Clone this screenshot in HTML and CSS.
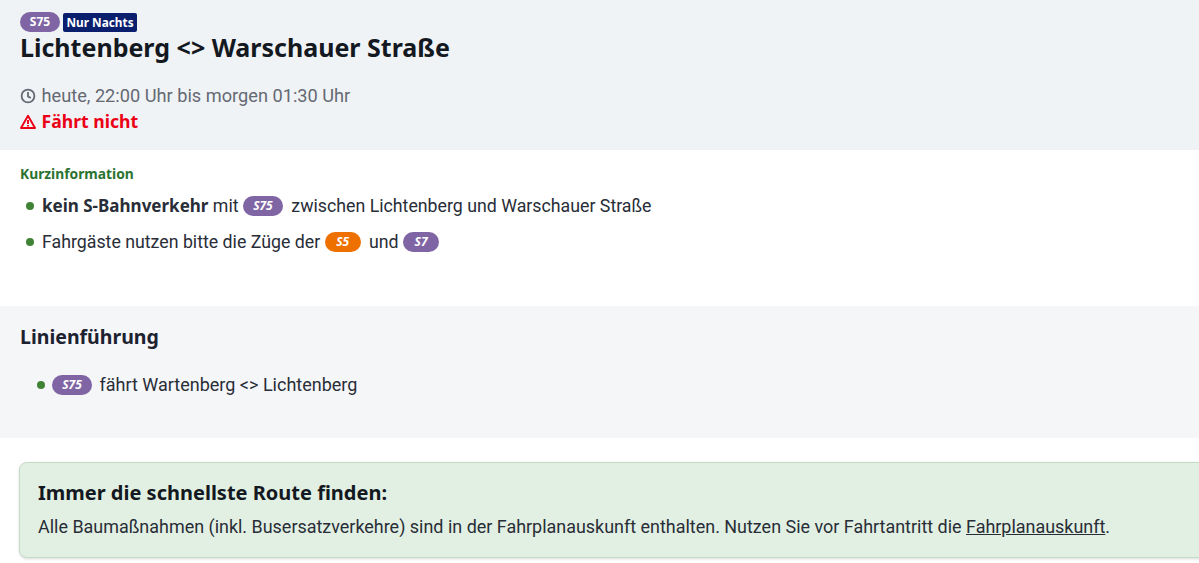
FILE: index.html
```html
<!DOCTYPE html>
<html lang="de">
<head>
    <meta charset="UTF-8">
    <meta name="viewport" content="width=device-width, initial-scale=1.0">
    <title>Lichtenberg &lt;&gt; Warschauer Straße</title>
    <link rel="stylesheet" href="styles.css">
</head>
<body>
    <header class="head">
        <div class="badges">
            <span class="line line-purple line-top">S75</span>
            <span class="night">Nur Nachts</span>
        </div>
        <h1>Lichtenberg &lt;&gt; Warschauer Straße</h1>
        <p class="time">
            <svg class="icon" viewBox="0 0 16 16" fill="none" stroke="currentColor" stroke-width="1.8"><circle cx="8" cy="8" r="6.4"/><path d="M8 4V8.4L10.8 10"/></svg>
            heute, 22:00 Uhr bis morgen 01:30 Uhr
        </p>
        <p class="status">
            <svg class="icon" viewBox="0 0 16 16" fill="none" stroke="currentColor" stroke-width="1.9"><path d="M8 1.8 15 14H1Z" stroke-linejoin="round"/><path d="M8 6V10M8 11V12.4"/></svg>
            Fährt nicht
        </p>
    </header>

    <section class="short">
        <h2>Kurzinformation</h2>
        <ul class="list">
            <li><b>kein S-Bahnverkehr</b> mit <span class="line line-purple">S75</span> zwischen Lichtenberg und Warschauer Straße</li>
            <li>Fahrgäste nutzen bitte die Züge der <span class="line line-orange">S5</span> und <span class="line line-purple line-small">S7</span></li>
        </ul>
    </section>

    <section class="route">
        <h3>Linienführung</h3>
        <ul class="list">
            <li><span class="line line-purple">S75</span> fährt Wartenberg &lt;&gt; Lichtenberg</li>
        </ul>
    </section>

    <section class="tip">
        <h4>Immer die schnellste Route finden:</h4>
        <p>Alle Baumaßnahmen (inkl. Busersatzverkehre) sind in der Fahrplanauskunft enthalten. Nutzen Sie vor Fahrtantritt die <a href="#">Fahrplanauskunft</a>.</p>
    </section>
</body>
</html>
```

FILE: styles.css
```css
* {
    margin: 0;
    padding: 0;
    box-sizing: border-box;
}

body {
    font-family: Roboto, sans-serif;
    color: #282d37;
    background: #fff;
    height: 563px;
    overflow: hidden;
}

.head {
    height: 150px;
    padding: 12px 20px 0;
    background: #f0f3f5;
}

.badges {
    display: flex;
    gap: 3px;
    height: 20px;
    align-items: center;
}

.line {
    display: inline-block;
    width: 40px;
    height: 20px;
    margin-right: 4px;
    border-radius: 10px;
    font-family: "Noto Sans", sans-serif;
    font-size: 12px;
    font-weight: 700;
    font-style: italic;
    line-height: 20px;
    text-align: center;
    color: #fff;
    vertical-align: 2px;
}

.line-top {
    margin: 0;
    font-style: normal;
}

.line-purple {
    background: #8065a4;
}

.line-orange {
    width: 36px;
    background: #ee7100;
}

.line-small {
    width: 36px;
}

.night {
    height: 19px;
    padding: 0 3.5px;
    border-radius: 2px;
    background: #0a1e6e;
    color: #fff;
    font-family: "Noto Sans", sans-serif;
    font-size: 11.8px;
    font-weight: 700;
    line-height: 19px;
}

h1 {
    font-family: "Noto Sans", sans-serif;
    font-size: 25px;
    line-height: 30px;
    color: #131821;
}

.time {
    margin-top: 21px;
    font-size: 18.2px;
    line-height: 26px;
    color: #646973;
}

.status {
    font-family: "Noto Sans", sans-serif;
    font-size: 17.6px;
    line-height: 24px;
    font-weight: 700;
    color: #ec0016;
}

.icon {
    width: 16px;
    height: 16px;
    margin-right: 1px;
    vertical-align: -2px;
}

.short {
    height: 156px;
    padding: 14px 20px 0;
}

h2 {
    font-family: "Noto Sans", sans-serif;
    font-size: 13.8px;
    line-height: 20px;
    color: #2a7230;
}

.list {
    list-style: none;
    font-size: 18px;
}

.list li {
    height: 37px;
    line-height: 37px;
}

.list li::before {
    content: "";
    display: inline-block;
    width: 8px;
    height: 8px;
    margin-right: 8px;
    border-radius: 50%;
    background: #408335;
    vertical-align: 2px;
}

.short .list {
    padding: 3px 0 0 6px;
    font-size: 17.75px;
}

.short b {
    font-family: "Noto Sans", sans-serif;
    font-size: 17px;
}

.route {
    height: 132px;
    padding: 17px 20px 0;
    background: #f5f6f8;
}

h3 {
    font-family: "Noto Sans", sans-serif;
    font-size: 19.5px;
    line-height: 28px;
    color: #1d2230;
}

.route .list {
    padding: 15px 0 0 17px;
}

.route .line {
    margin: 0 3px 0 -1px;
}

.tip {
    width: 1300px;
    height: 96px;
    margin: 24px 0 0 19px;
    padding: 16px 18px;
    border: 1px solid #c3dcc6;
    border-radius: 8px;
    background: #e2f0e3;
    box-shadow: 0 1px 3px rgba(0, 0, 0, 0.15);
}

h4 {
    font-family: "Noto Sans", sans-serif;
    font-size: 20px;
    line-height: 28px;
    color: #131821;
}

.tip p {
    margin-top: 7px;
    font-size: 17.95px;
    line-height: 26px;
}

.tip a {
    color: inherit;
}
```
